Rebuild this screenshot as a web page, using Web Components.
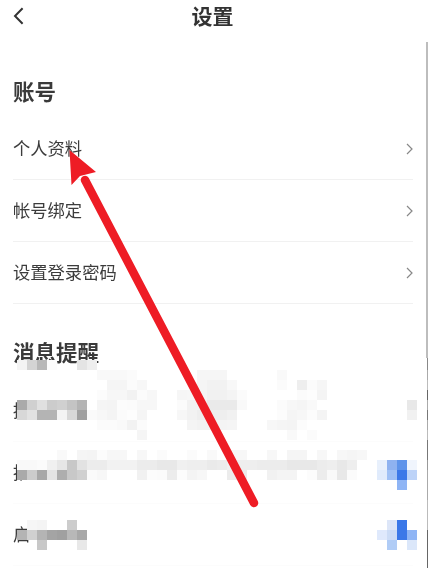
<!DOCTYPE html>
<html lang="zh">
<head>
<meta charset="utf-8">
<title>设置</title>
<style>
  html, body { margin: 0; height: 100%; overflow: hidden; background: #fff; }
  body { font-family: "Noto Sans CJK SC", "Noto Sans", sans-serif; color: #333; }
</style>
</head>
<body>
<settings-page>
  <app-header title="设置"></app-header>
  <section-title>账号</section-title>
  <setting-row>个人资料</setting-row>
  <setting-row>帐号绑定</setting-row>
  <setting-row>设置登录密码</setting-row>
  <section-title compact>消息提醒</section-title>
  <setting-row faint plain>接</setting-row>
  <setting-row faint plain>推</setting-row>
  <setting-row faint plain>启</setting-row>
  <pixel-mosaic slot="over"></pixel-mosaic>
  <red-arrow slot="over"></red-arrow>
  <scroll-thumb slot="over"></scroll-thumb>
</settings-page>

<script>
class SettingsPage extends HTMLElement {
  constructor() {
    super();
    this.attachShadow({mode: 'open'}).innerHTML = `
      <style>
        :host {
          display: flex;
          flex-direction: column;
          position: relative;
          height: 568px;
          overflow: hidden;
          filter: blur(0.35px);
        }
      </style>
      <slot></slot>
      <slot name="over"></slot>`;
  }
}

class AppHeader extends HTMLElement {
  constructor() {
    super();
    this.attachShadow({mode: 'open'}).innerHTML = `
      <style>
        :host {
          display: grid;
          grid-template-columns: 46px 1fr 50px;
          align-items: center;
          height: 32px;
          color: #333;
        }
        svg { margin-left: 13px; display: block; }
        h1 {
          margin: -1px 0 1px;
          font-size: 21px;
          font-weight: 700;
          line-height: 32px;
          text-align: center;
        }
      </style>
      <svg width="11" height="18" viewBox="0 0 11 18">
        <path d="M9.6 1.2 2 9l7.6 7.8" fill="none" stroke="#333" stroke-width="2"/>
      </svg>
      <h1></h1>`;
  }
  connectedCallback() {
    this.shadowRoot.querySelector('h1').textContent = this.getAttribute('title');
  }
}

class SectionTitle extends HTMLElement {
  constructor() {
    super();
    this.attachShadow({mode: 'open'}).innerHTML = `
      <style>
        :host {
          display: block;
          padding: 44px 13px 12px;
          font-size: 21.5px;
          font-weight: 700;
          line-height: 30px;
          color: #3a3a3a;
        }
        :host([compact]) { padding: 33px 13px 13px; }
      </style>
      <slot></slot>`;
  }
}

class SettingRow extends HTMLElement {
  constructor() {
    super();
    this.attachShadow({mode: 'open'}).innerHTML = `
      <style>
        :host {
          display: flex;
          align-items: center;
          justify-content: space-between;
          box-sizing: border-box;
          height: 62px;
          margin: 0 16px 0 13px;
          border-bottom: 1px solid #f1f1f1;
          font-size: 17.3px;
          color: #3c3c3c;
        }
        :host([faint]) { border-bottom-color: #fcfcfc; }
        :host([plain]) svg { display: none; }
        span { margin-top: -2px; }
      </style>
      <span><slot></slot></span>
      <svg width="7" height="12" viewBox="0 0 7 12">
        <path d="M1 1l5 5-5 5" fill="none" stroke="#888" stroke-width="1.2"/>
      </svg>`;
  }
}

// Pixelated area: each row is "row col:value ..." on a 10px grid, values are gray bytes or full hex
const MOSAIC = [
  '0 0:f4 1:d4 2:b8 3:fc 6:e4 7:ee',
  '1 8:f9 9:f9 10:f9 11:fb 18:f6 19:f6 20:f6 26:f9',
  '2 9:f5 10:f5 11:fb 12:f7 18:f5 19:f2 20:f2 21:f8 26:fb 28:ee 29:fb 30:f6',
  '3 8:fc 9:f7 10:f7 11:f2 12:fb 13:f7 16:f6 17:f7 18:f5 19:f1 20:f1 21:f4 22:fb 28:fb 29:fd 30:f4',
  '4 0:aa 1:d0 2:e0 3:cc 4:d0 5:c4 6:b4 8:f5 9:f4 10:fc 11:fb 12:f7 13:f7 16:fb 17:f2 18:f2 19:ea 20:ea 21:ea 22:f9 26:fb 27:f7 28:f5 29:f9 39:e8',
  '5 0:d8 1:e2 2:b4 3:b4 4:f4 5:d8 6:a0 7:fa 8:f7 9:f4 10:fb 11:fd 12:f5 16:f7 17:f2 18:ee 19:ee 20:ee 21:f1 26:fc 27:f5 28:f7 29:fc 30:f4 39:f1',
  '6 8:fb 9:fb 10:f9 11:f2 12:fb 17:f4 18:f2 19:f2 20:f4 21:f5 25:f7 26:f5 27:f4 28:fc',
  '7 12:f5 27:f9 29:fb',
  '9 4:f9 6:f5 7:f4 8:fc 9:f7 10:f7 12:f7 14:fb 17:fb 19:f9 21:f7 22:f7 25:f7 27:f5 28:f5 30:f7 32:f7 33:f5 34:f7',
  '10 0:f9 1:f9 2:fb 3:f0 4:e6 5:c8 6:e2 7:ec 8:ec 9:f2 10:f2 11:f2 12:ec 13:ec 14:e8 15:e8 16:f0 17:ee 18:ee 19:ea 20:ec 21:f0 22:ee 23:ee 24:ec 25:ec 26:ec 27:e8 28:e8 29:e8 30:ec 31:ee 32:e8 33:ee 36:e8f0fc 37:8fb2f0 38:5e93ea 39:f0f5fd',
  '11 0:aa 1:cc 2:a8 3:e4 4:ae 5:c8 6:d0 7:fa 8:f7 12:f1 13:fc 14:fb 15:ec 16:fc 17:f4 18:f7 21:ec 22:ec 25:f1 26:f4 27:f4 29:fc 30:ec 31:f9 32:e8 33:fb 36:e0ebfc 37:9fc0f5 38:3b78e8 39:bdd3f8',
  '12 38:8fb5f5',
  '16 1:f6 2:f4 5:cc 37:dde6f8 38:3b78e8',
  '17 0:b4 1:d0 2:b4 3:a4 4:a0 5:b8 6:a8 36:dfe9fc 37:ccdcf6 38:3b78e8 39:8fb5f5',
  '18 2:c8 6:e8 37:b0ccf6 39:dbe7fa'
];

class PixelMosaic extends HTMLElement {
  constructor() {
    super();
    const root = this.attachShadow({mode: 'open'});
    let cells = '';
    for (const line of MOSAIC) {
      const [row, ...items] = line.split(' ');
      for (const item of items) {
        const [col, value] = item.split(':');
        const color = value.length === 2 ? '#' + value + value + value : '#' + value;
        cells += `<i style="grid-area:${+row + 1}/${+col + 1};background:${color}"></i>`;
      }
    }
    root.innerHTML = `
      <style>
        :host {
          position: absolute;
          left: 17px;
          top: 360px;
          display: grid;
          grid-template-columns: repeat(41, 10px);
          grid-auto-rows: 10px;
        }
        /* edge of the pixelated area, cuts the heading above the first row */
        :host::before {
          content: '';
          position: absolute;
          left: 0;
          top: -1px;
          width: 80px;
          height: 11px;
          background: #fff;
          z-index: -1;
        }
      </style>
      ${cells}`;
  }
}

class RedArrow extends HTMLElement {
  constructor() {
    super();
    this.attachShadow({mode: 'open'}).innerHTML = `
      <style>
        :host { position: absolute; inset: 0; pointer-events: none; }
        svg { display: block; }
      </style>
      <svg width="429" height="568" viewBox="0 0 429 568">
        <path d="M85 180 254 503" fill="none" stroke="#ee1c25" stroke-width="8.5" stroke-linecap="round"/>
        <path d="M69.5 150 96 172 80 176 71.5 185z" fill="#ee1c25"/>
      </svg>`;
  }
}

// Scrollbar thumb, then the broken-up edge of the screenshot below it (heights and grays read off the reference)
const EDGE = [[12, '#888'], [10, '#aaa'], [10, '#bbb'], [10, '#666'], [10, '#aaa'], [10, '#777'], [10, '#aaa'], [10, '#bbb'],
  [20, '#777'], [10, '#999'], [30, '#aaa'], [30, '#bbb'], [38, '#666']];

class ScrollThumb extends HTMLElement {
  constructor() {
    super();
    const parts = EDGE.map(([h, c]) => `<i style="height:${h}px;background:${c}"></i>`).join('');
    this.attachShadow({mode: 'open'}).innerHTML = `
      <style>
        :host {
          position: absolute;
          right: 1px;
          top: 42px;
          bottom: 0;
          width: 2px;
          display: flex;
          flex-direction: column;
          align-items: flex-end;
        }
        b { display: block; flex: none; width: 2px; height: 316px; background: #bdbdbd; }
        i { display: block; flex: none; width: 1px; }
      </style>
      <b></b>
      ${parts}`;
  }
}

customElements.define('settings-page', SettingsPage);
customElements.define('app-header', AppHeader);
customElements.define('section-title', SectionTitle);
customElements.define('setting-row', SettingRow);
customElements.define('pixel-mosaic', PixelMosaic);
customElements.define('red-arrow', RedArrow);
customElements.define('scroll-thumb', ScrollThumb);
</script>
</body>
</html>
